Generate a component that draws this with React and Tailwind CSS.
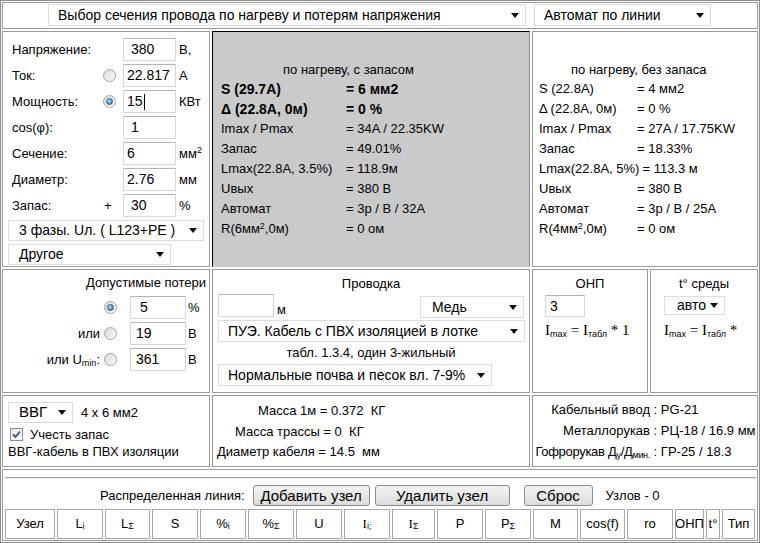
import React from 'react'

function Arrow() {
  return (
    <svg width="8" height="5" viewBox="0 0 8 5" className="shrink-0">
      <path d="M0 0H8L4 5Z" fill="#111" />
    </svg>
  )
}

function Select({ className = '', text, textClass = '' }) {
  return (
    <div className={`flex items-center justify-between border border-[#dcdcdc] bg-white pr-[6px] ${className}`}>
      <span className={`whitespace-nowrap ${textClass}`}>{text}</span>
      <Arrow />
    </div>
  )
}

function Input({ value, className = '', pad = 'pl-[4px]' }) {
  return (
    <div className={`flex items-center border border-[#d6d6d6] border-t-[#b5b5b5] bg-white text-[14px] ${pad} ${className}`}>
      {value}
    </div>
  )
}

function Radio({ on }) {
  return (
    <span className="inline-flex h-[13px] w-[13px] items-center justify-center rounded-full border border-[#a4a4a4] bg-gradient-to-br from-[#d9d9d9] to-[#fbfbfb]">
      {on && <span className="h-[7px] w-[7px] rounded-full border border-[#2a5d86] bg-[radial-gradient(circle_at_35%_35%,#a9dcf7,#2a6fa6)]" />}
    </span>
  )
}

function Checkbox() {
  return (
    <span className="inline-flex h-[13px] w-[13px] items-center justify-center border border-[#8e8f8f] bg-gradient-to-br from-[#e6e6e6] to-[#ffffff]">
      <svg width="9" height="9" viewBox="0 0 9 9">
        <path d="M1 4.5L3.5 7L8 1.5" fill="none" stroke="#3b4f8a" strokeWidth="1.8" />
      </svg>
    </span>
  )
}

function Formula({ last }) {
  return (
    <div className="whitespace-nowrap font-['Liberation_Serif',serif] text-[15px]">
      I<sub className="font-['Liberation_Sans',sans-serif] text-[9px]">max</sub> = I
      <sub className="font-['Liberation_Sans',sans-serif] text-[9px]">табл</sub> *{last}
    </div>
  )
}

const cell = 'border border-[#9a9a9a] bg-white'
const btn = 'h-[21px] rounded-[3px] border border-[#8a8a8a] bg-gradient-to-b from-[#f4f4f4] to-[#dcdcdc] text-[15px] leading-[19px]'

const grayRows = [
  ['S (29.7A)', '= 6 мм2', true],
  ['Δ (22.8A, 0м)', '= 0 %', true],
  ['Imax / Pmax', '= 34A / 22.35KW'],
  ['Запас', '= 49.01%'],
  ['Lmax(22.8A, 3.5%)', '= 118.9м'],
  ['Uвых', '= 380 В'],
  ['Автомат', '= 3р / В / 32А'],
  [<>R(6мм<sup className="text-[9px]">2</sup>,0м)</>, '= 0 ом'],
]

const plainRows = [
  ['S (22.8A)', '= 4 мм2'],
  ['Δ (22.8A, 0м)', '= 0 %'],
  ['Imax / Pmax', '= 27A / 17.75KW'],
  ['Запас', '= 18.33%'],
  ['Lmax(22.8A, 5%)', '= 113.3 м'],
  ['Uвых', '= 380 В'],
  ['Автомат', '= 3р / В / 25А'],
  [<>R(4мм<sup className="text-[9px]">2</sup>,0м)</>, '= 0 ом'],
]

const sub = 'text-[9px]'
const heads = [
  ['Узел', 50],
  [<>L<sub className={sub}>i</sub></>, 46],
  [<>L<sub className={sub}>Σ</sub></>, 45],
  ['S', 46],
  [<>%<sub className={sub}>i</sub></>, 46],
  [<>%<sub className={sub}>Σ</sub></>, 46],
  ['U', 46],
  [<><span className="font-['Liberation_Serif',serif]">I</span><sub className={sub}>i;</sub></>, 46],
  [<><span className="font-['Liberation_Serif',serif]">I</span><sub className={sub}>Σ</sub></>, 43],
  ['P', 46],
  [<>P<sub className={sub}>Σ</sub></>, 46],
  ['M', 45],
  ['cos(f)', 45],
  ['ro', 46],
  ['ОНП', 29],
  ['t°', 14],
  ['Тип', 33],
]

export default function App() {
  return (
    <div className="h-[543px] w-[760px] overflow-hidden bg-white font-['Liberation_Sans',sans-serif] text-[13px] text-black">
      <div className="flex h-full flex-col gap-[2px] border border-[#8c8c8c] p-px">
        {/* title row */}
        <div className={`${cell} flex h-[27px] items-start pl-[45px] pt-px`}>
          <Select className="h-[22px] w-[478px]" textClass="pl-[9px] text-[14px]" text="Выбор сечения провода по нагреву и потерям напряжения" />
          <Select className="ml-[8px] h-[22px] w-[177px]" textClass="pl-[9px] text-[14px]" text="Автомат по линии" />
        </div>

        {/* inputs + results */}
        <div className="flex h-[236px] gap-[2px]">
          <div className={`${cell} w-[208px] pl-[9px] pt-[6px]`}>
            {[
              ['Напряжение:', null, '380', 'В,', 'pl-[7px]'],
              ['Ток:', 'off', '22.817', 'А'],
              ['Мощность:', 'on', '15', 'КВт'],
              ['cos(φ):', null, '1', '', 'pl-[7px]'],
              ['Сечение:', null, '6', <>мм<sup className="text-[9px]">2</sup></>],
              ['Диаметр:', null, '2.76', 'мм'],
              ['Запас:', '+', '30', '%', 'pl-[7px]'],
            ].map(([label, mark, val, unit, pad], i) => (
              <div key={i} className="mb-[3px] flex h-[23px] items-center">
                <span className="w-[91px]">{label}</span>
                <span className="flex w-[20px] items-center">
                  {mark === 'on' && <Radio on />}
                  {mark === 'off' && <Radio />}
                  {mark === '+' && <span className="pl-[1px]">+</span>}
                </span>
                <Input
                  className="h-[23px] w-[53px]"
                  pad={pad || 'pl-[3px]'}
                  value={
                    mark === 'on' ? (
                      <>
                        {val}
                        <span className="ml-px inline-block h-[16px] w-px bg-black" />
                      </>
                    ) : (
                      val
                    )
                  }
                />
                <span className="ml-[3px]">{unit}</span>
              </div>
            ))}
            <Select className="mt-[1px] h-[21px] w-[196px] -ml-[4px]" textClass="pl-[10px] text-[14px]" text="3 фазы. Uл.  ( L123+PE )" />
            <Select className="mt-[3px] h-[21px] w-[163px] -ml-[4px]" textClass="pl-[10px] text-[14px]" text="Другое" />
          </div>

          <div className="w-[318px] border border-black border-b-[#c9c9c9] border-r-[#8a8a8a] bg-[#cacaca] pl-[8px] pt-[28px]">
            <div className="h-[19px] pl-[62px] leading-[19px]">по нагреву, с запасом</div>
            {grayRows.map(([l, v, b], i) => (
              <div key={i} className={`flex h-[20px] items-center whitespace-nowrap ${b ? 'text-[14px] font-bold' : ''}`}>
                <span className="w-[125px]">{l}</span>
                <span>{v}</span>
              </div>
            ))}
          </div>

          <div className={`${cell} flex-1 pl-[6px] pt-[28px]`}>
            <div className="h-[19px] pl-[32px] leading-[19px]">по нагреву, без запаса</div>
            {plainRows.map(([l, v], i) => (
              <div key={i} className="flex h-[20px] items-center whitespace-nowrap">
                <span className="min-w-[98px] pr-[3px]">{l}</span>
                <span>{v}</span>
              </div>
            ))}
          </div>
        </div>

        {/* losses, wiring, ONP, t */}
        <div className="flex h-[124px] gap-[2px]">
          <div className={`${cell} w-[208px] pl-[9px] pr-[3px] pt-[3px]`}>
            <div className="h-[20px] text-right leading-[20px]">Допустимые потери</div>
            {[
              ['', true, '5', '%', 'pl-[9px]'],
              ['или', false, '19', 'В'],
              [<>или U<sub className="text-[9px]">min</sub>:</>, false, '361', 'В'],
            ].map(([label, on, val, unit, pad], i) => (
              <div key={i} className="mt-[3px] flex h-[23px] items-center">
                <span className="w-[88px] text-right">{label}</span>
                <span className="ml-[4px] flex w-[26px] items-center">
                  <Radio on={on} />
                </span>
                <Input className="h-[23px] w-[56px]" pad={pad || 'pl-[5px]'} value={val} />
                <span className="ml-[2px]">{unit}</span>
              </div>
            ))}
          </div>

          <div className={`${cell} w-[318px] px-[5px] pt-[3px]`}>
            <div className="h-[21px] text-center leading-[21px]">Проводка</div>
            <div className="flex h-[23px] items-start justify-between">
              <div className="flex items-end">
                <Input className="h-[23px] w-[56px]" value="" />
                <span className="ml-[3px] leading-[14px]">м</span>
              </div>
              <Select className="mt-[2px] h-[22px] w-[104px]" textClass="pl-[11px] text-[14px]" text="Медь" />
            </div>
            <Select className="mt-[3px] h-[22px] w-[307px]" textClass="pl-[9px] text-[14px]" text="ПУЭ. Кабель с ПВХ изоляцией в лотке" />
            <div className="h-[22px] text-center leading-[22px]">табл. 1.3.4, один 3-жильный</div>
            <Select className="h-[22px] w-[274px]" textClass="pl-[9px] text-[14px]" text="Нормальные почва и песок вл. 7-9%" />
          </div>

          <div className={`${cell} w-[116px] pl-[12px] pt-[3px]`}>
            <div className="-ml-[12px] h-[21px] text-center leading-[21px]">ОНП</div>
            <Input className="mt-[1px] h-[22px] w-[40px]" pad="pl-[4px]" value="3" />
            <div className="mt-[2px]">
              <Formula last=" 1" />
            </div>
          </div>

          <div className={`${cell} flex-1 overflow-hidden pl-[13px] pt-[3px]`}>
            <div className="-ml-[13px] h-[21px] text-center leading-[21px]">t° среды</div>
            <Select className="mt-[2px] h-[19px] w-[61px]" textClass="pl-[12px] text-[14px]" text="авто" />
            <div className="mt-[4px]">
              <Formula last="" />
            </div>
          </div>
        </div>

        {/* cable info */}
        <div className="flex h-[72px] gap-[2px]">
          <div className={`${cell} w-[208px] pl-[5px] pt-[6px]`}>
            <div className="flex items-center">
              <Select className="h-[21px] w-[65px]" textClass="pl-[10px] text-[15px]" text="ВВГ" />
              <span className="ml-[8px]">4 x 6 мм2</span>
            </div>
            <div className="mt-[3px] flex h-[17px] items-center pl-[2px]">
              <Checkbox />
              <span className="ml-[7px]">Учесть запас</span>
            </div>
            <div className="h-[18px] leading-[18px]">ВВГ-кабель в ПВХ изоляции</div>
          </div>

          <div className={`${cell} w-[318px] pt-[4px] whitespace-nowrap`}>
            <div className="h-[21px] pl-[45px] leading-[21px]">Масса 1м = 0.372&nbsp; КГ</div>
            <div className="h-[21px] pl-[22px] leading-[21px]">Масса трассы = 0&nbsp; КГ</div>
            <div className="h-[20px] pl-[4px] leading-[20px]">Диаметр кабеля = 14.5&nbsp; мм</div>
          </div>

          <div className={`${cell} flex-1 overflow-hidden pt-[3px] whitespace-nowrap`}>
            {[
              ['Кабельный ввод', 'PG-21', ''],
              ['Металлорукав', 'РЦ-18 / 16.9 мм', ''],
              [<>Гофрорукав Д<sub className="text-[9px]">у</sub>/Д<sub className="text-[9px]">мин.</sub></>, 'ГР-25 / 18.3', 'tracking-[-0.3px]'],
            ].map(([l, v, t], i) => (
              <div key={i} className="flex h-[21px] items-center">
                <span className={`flex w-[117px] shrink-0 justify-end ${t}`}>
                  <span>{l}</span>
                </span>
                <span>&nbsp;: {v}</span>
              </div>
            ))}
          </div>
        </div>

        {/* distributed line */}
        <div className={`${cell} flex-1 pl-[2px] pt-[7px]`}>
          <div className="mr-[1px] h-[2px] border-t border-b border-t-[#a0a0a0] border-b-[#e8e8e8]" />
          <div className="mt-[5px] flex h-[23px] items-center pl-[95px]">
            <span>Распределенная линия:</span>
            <button className={`ml-[8px] w-[117px] ${btn}`}>Добавить узел</button>
            <button className={`ml-[5px] w-[135px] ${btn}`}>Удалить узел</button>
            <button className={`ml-[14px] w-[69px] ${btn}`}>Сброс</button>
            <span className="ml-[13px]">Узлов - 0</span>
          </div>
          <div className="mt-[2px] flex gap-[2px]">
            {heads.map(([h, w], i) => (
              <div key={i} style={{ width: w }} className="flex h-[30px] shrink-0 items-center justify-center border border-[#a8a8a8] whitespace-nowrap">
                {h}
              </div>
            ))}
          </div>
        </div>
      </div>
    </div>
  )
}
